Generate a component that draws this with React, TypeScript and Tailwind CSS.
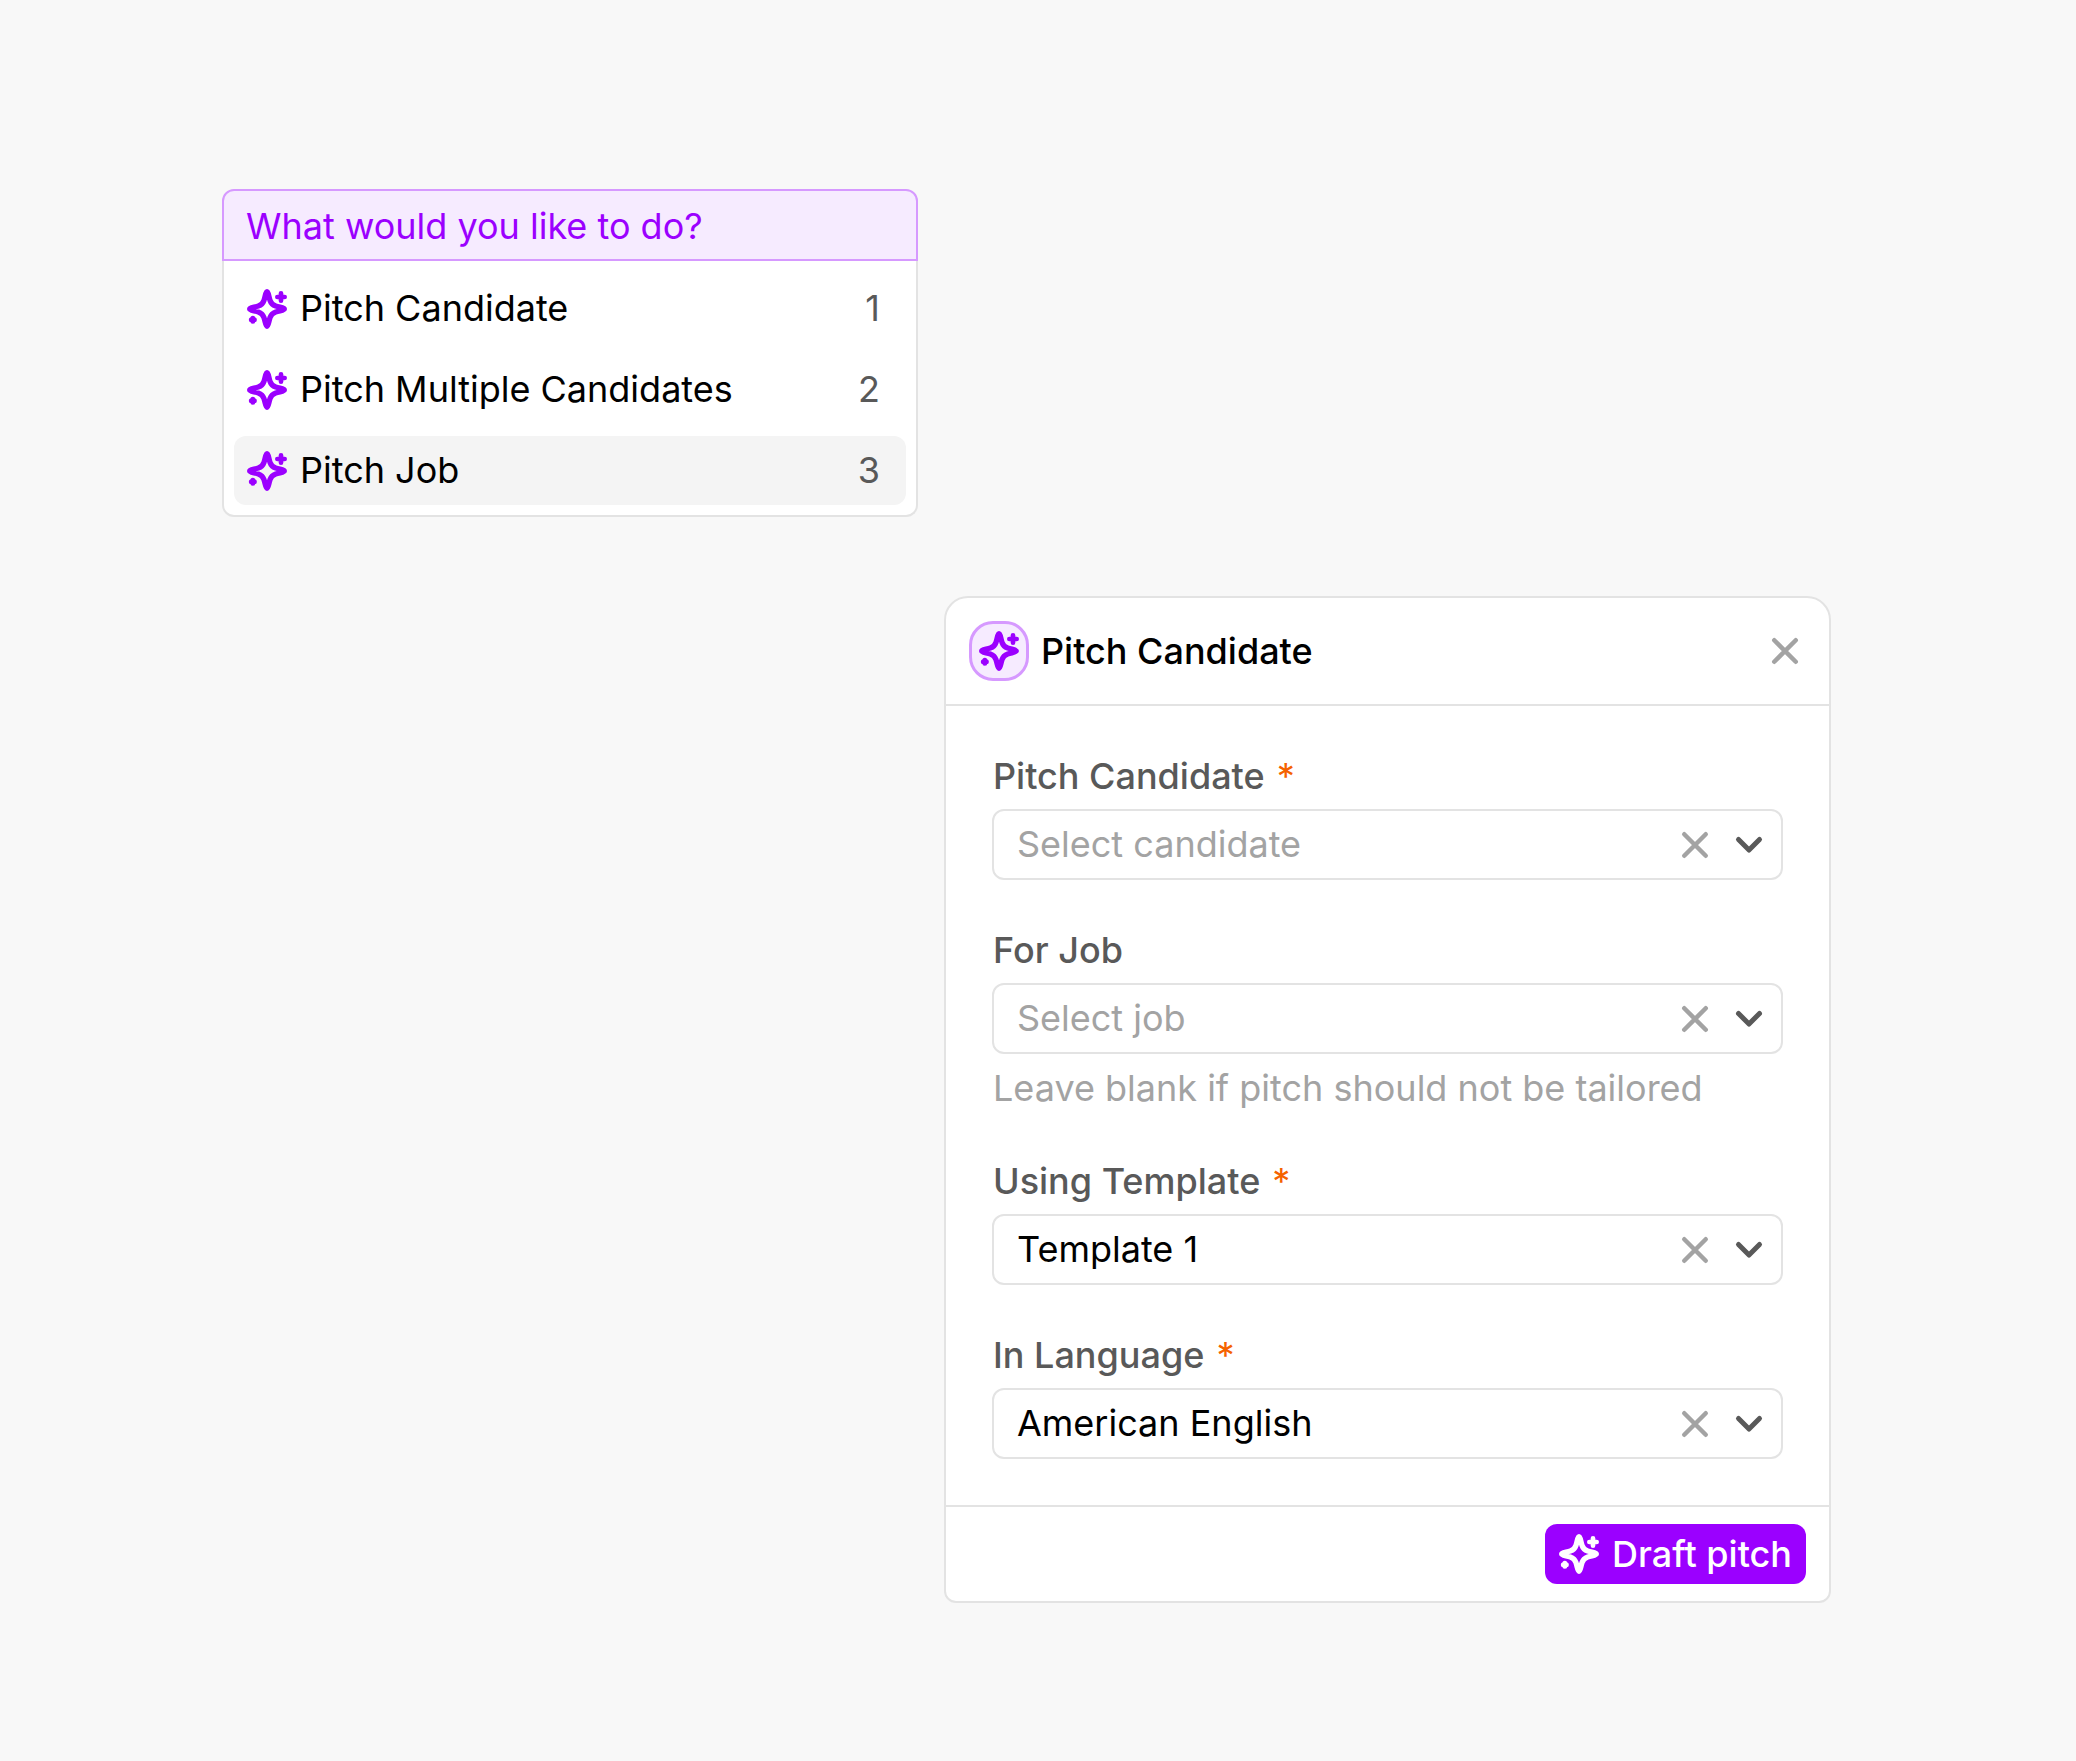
import { useState } from 'react';

const menuItems = ['Pitch Candidate', 'Pitch Multiple Candidates', 'Pitch Job'];

const fields = [
  { id: 'candidate', label: 'Pitch Candidate', required: true, placeholder: 'Select candidate', options: ['Candidate 1', 'Candidate 2'], initial: '' },
  { id: 'job', label: 'For Job', required: false, placeholder: 'Select job', options: ['Job 1', 'Job 2'], initial: '', hint: 'Leave blank if pitch should not be tailored' },
  { id: 'template', label: 'Using Template', required: true, placeholder: 'Select template', options: ['Template 1', 'Template 2'], initial: 'Template 1' },
  { id: 'language', label: 'In Language', required: true, placeholder: 'Select language', options: ['American English', 'British English'], initial: 'American English' },
];

type Field = (typeof fields)[number];

function SparkleIcon() {
  return (
    <svg viewBox="0 0 120 120" className="size-10 shrink-0" fill="none" stroke="currentColor" strokeLinecap="round" strokeLinejoin="round" aria-hidden="true">
      <path
        strokeWidth="16"
        d="M60 8 C64 8 65 22 69 34 C72 43 77 48 86 51 C98 55 112 56 112 60 C112 64 98 65 86 69 C77 72 72 77 69 86 C65 98 64 112 60 112 C56 112 55 98 51 86 C48 77 43 72 34 69 C22 65 8 64 8 60 C8 56 22 55 34 51 C43 48 48 43 51 34 C55 22 56 8 60 8 Z"
      />
      <path strokeWidth="14" d="M102 13 V35 M91 24 H113" />
      <path strokeWidth="15" d="M17.500 87.500 V96.500 M13 92 H22" />
    </svg>
  );
}

function CrossIcon() {
  return (
    <svg viewBox="0 0 36 36" className="size-9" fill="none" stroke="currentColor" strokeWidth="4.500" strokeLinecap="round" aria-hidden="true">
      <path d="M7.250 7.250 L28.750 28.750 M28.750 7.250 L7.250 28.750" />
    </svg>
  );
}

function SelectField({ field }: { field: Field }) {
  const [value, setValue] = useState(field.initial);

  return (
    <div>
      <label htmlFor={field.id} className="mb-2.5 flex h-[45px] items-center gap-3 pl-px font-medium text-[#595959]">
        {field.label}
        {field.required && <span className="font-normal text-[#f56200]">*</span>}
      </label>
      <div className="flex h-[71px] items-center rounded-xl border-2 border-[#e3e3e3] bg-white pr-3.5">
        <select
          id={field.id}
          value={value}
          onChange={(e) => setValue(e.target.value)}
          className={`h-full min-w-0 flex-1 appearance-none bg-transparent pl-[23px] outline-none ${value ? 'text-black' : 'text-[#a3a3a3]'}`}
        >
          <option value="">{field.placeholder}</option>
          {field.options.map((option) => (
            <option key={option}>{option}</option>
          ))}
        </select>
        <button type="button" aria-label={`Clear ${field.label}`} onClick={() => setValue('')} className="mr-[18px] text-[#a3a3a3]">
          <CrossIcon />
        </button>
        <svg viewBox="0 0 36 36" className="size-9 text-[#595959]" fill="none" stroke="currentColor" strokeWidth="5" strokeLinecap="round" strokeLinejoin="round" aria-hidden="true">
          <path d="M7.500 12.500 L18 23 L28.500 12.500" />
        </svg>
      </div>
      {field.hint && <p className="mt-3 pl-px text-[#a3a3a3]">{field.hint}</p>}
    </div>
  );
}

export default function App() {
  const [active, setActive] = useState(2);

  return (
    <main className="min-h-screen bg-[#f8f8f8] px-[222px] pt-[189px] pb-[158px] font-['Inter',sans-serif] text-4xl leading-[45px] text-black">
      <nav className="w-full max-w-[696px]">
        <h2 className="rounded-t-xl border-2 border-[#d699ff] bg-[#f6ebff] px-[22px] pt-[13px] pb-2.5 text-[#9b00ff]">
          What would you like to do?
        </h2>
        <ul className="flex flex-col gap-3 rounded-b-xl border-2 border-t-0 border-[#e3e3e3] bg-white p-2.5 pt-[13px]">
          {menuItems.map((item, index) => (
            <li key={item}>
              <button
                type="button"
                onClick={() => setActive(index)}
                className={`flex h-[69px] w-full items-center gap-[13px] rounded-xl pr-[26px] pl-[13px] ${index === active ? 'bg-[#f4f4f4]' : ''}`}
              >
                <span className="text-[#9b00ff]">
                  <SparkleIcon />
                </span>
                <span>{item}</span>
                <span className="ml-auto text-[#595959]">{index + 1}</span>
              </button>
            </li>
          ))}
        </ul>
      </nav>

      <form
        onSubmit={(e) => e.preventDefault()}
        className="mt-[79px] mr-[23px] ml-auto w-full max-w-[887px] rounded-t-3xl rounded-b-xl border-2 border-[#e3e3e3] bg-white"
      >
        <header className="flex items-center gap-3 border-b-2 border-[#e3e3e3] p-[23px]">
          <span className="flex size-[60px] items-center justify-center rounded-3xl border-3 border-[#d699ff] bg-[#f6ebff] text-[#9b00ff]">
            <SparkleIcon />
          </span>
          <h1 className="font-medium">Pitch Candidate</h1>
          <button type="button" aria-label="Close" className="mr-[3px] ml-auto text-[#a3a3a3]">
            <CrossIcon />
          </button>
        </header>
        <div className="flex flex-col gap-12 px-[46px] pt-12 pb-[46px]">
          {fields.map((field) => (
            <SelectField key={field.id} field={field} />
          ))}
        </div>
        <footer className="flex justify-end border-t-2 border-[#e3e3e3] px-[23px] py-[17px]">
          <button type="submit" className="flex h-[60px] items-center gap-[13px] rounded-xl bg-[#9b00ff] px-3.5 font-medium text-white">
            <SparkleIcon />
            Draft pitch
          </button>
        </footer>
      </form>
    </main>
  );
}
